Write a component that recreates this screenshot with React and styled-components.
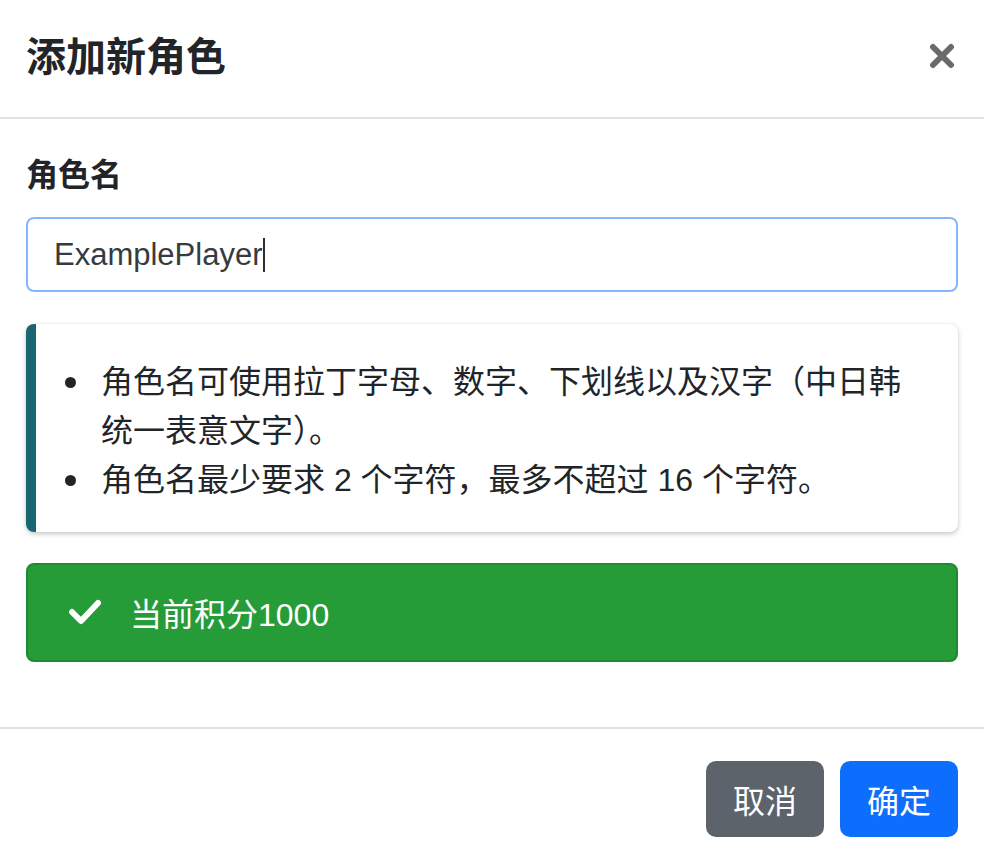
import React from "react";
import styled, { createGlobalStyle } from "styled-components";

const GlobalStyle = createGlobalStyle`
    html, body {
        margin: 0;
        padding: 0;
        background: #fff;
    }
    body {
        font-family: "Liberation Sans", "Noto Sans CJK SC", sans-serif;
        color: #212529;
        -webkit-font-smoothing: antialiased;
    }
`;

const Modal = styled.div`
    width: 984px;
    background: #fff;
`;

const Header = styled.div`
    display: flex;
    align-items: center;
    justify-content: space-between;
    height: 119px;
    padding: 0 26px;
    box-sizing: border-box;
    border-bottom: 2px solid #dee2e6;
`;

const Title = styled.h5`
    margin: 0 0 4px;
    font-size: 40px;
    line-height: 60px;
    font-weight: 700;
    color: #212529;
`;

const CloseButton = styled.button`
    display: flex;
    align-items: center;
    justify-content: center;
    width: 32px;
    height: 32px;
    margin: 0 0 6px;
    padding: 0;
    border: 0;
    background: transparent;
    cursor: pointer;
`;

const Body = styled.div`
    padding: 32px 26px 65px;
`;

const Label = styled.label`
    display: block;
    font-size: 32px;
    line-height: 48px;
    font-weight: 600;
    margin-bottom: 18px;
`;

const Field = styled.div`
    display: flex;
    align-items: center;
    height: 75px;
    box-sizing: border-box;
    padding: 0 26px;
    border: 2px solid #86b7fe;
    border-radius: 8px;
    font-size: 31px;
    color: #353b41;
    margin-bottom: 32px;
`;

const Caret = styled.span`
    display: inline-block;
    width: 2px;
    height: 34px;
    margin-left: 1px;
    background: #2b2f33;
`;

const Callout = styled.div`
    border-left: 10px solid #18666f;
    border-radius: 8px;
    box-shadow: 0 2px 5px rgba(0, 0, 0, 0.22), 0 0 1px rgba(0, 0, 0, 0.12);
    padding: 34px 40px 27px 0;
    margin-bottom: 31px;
`;

const Notes = styled.ul`
    margin: 0;
    padding-left: 29px;
    list-style: none;
    font-size: 32px;
    line-height: 49px;
    color: #212529;
`;

const Note = styled.li`
    display: flex;
    align-items: flex-start;
    gap: 25px;
`;

const Dot = styled.span`
    flex: none;
    width: 11px;
    height: 11px;
    margin-top: 19px;
    border-radius: 50%;
    background: #212529;
`;

const Alert = styled.div`
    display: flex;
    align-items: center;
    gap: 28px;
    height: 99px;
    box-sizing: border-box;
    padding: 0 40px 2px 40px;
    background: #259c37;
    border: 2px solid #208a30;
    border-radius: 8px;
    color: #fff;
    font-size: 32px;
`;

const Footer = styled.div`
    display: flex;
    justify-content: flex-end;
    gap: 16px;
    padding: 32px 26px;
    border-top: 2px solid #dee2e6;
`;

const Button = styled.button`
    height: 76px;
    padding: 0 27px;
    border: 0;
    border-radius: 10px;
    font-family: inherit;
    font-size: 32px;
    color: #fff;
    background: ${({ $variant }) => ($variant === "primary" ? "#0d6efd" : "#5c636a")};
    cursor: pointer;
`;

function CloseIcon() {
    return (
        <svg width="26" height="26" viewBox="0 0 26 26">
            <path
                d="M4 4 L22 22 M22 4 L4 22"
                stroke="#6a6a6a"
                strokeWidth="6"
                strokeLinecap="round"
            />
        </svg>
    );
}

function CheckIcon() {
    return (
        <svg width="34" height="28" viewBox="0 0 34 28">
            <path
                d="M4 14 L13 23 L30 5"
                fill="none"
                stroke="#fff"
                strokeWidth="6"
                strokeLinecap="round"
                strokeLinejoin="round"
            />
        </svg>
    );
}

const notes = [
    "角色名可使用拉丁字母、数字、下划线以及汉字（中日韩统一表意文字）。",
    "角色名最少要求 2 个字符，最多不超过 16 个字符。",
];

export default function App() {
    return (
        <>
            <GlobalStyle />
            <Modal>
                <Header>
                    <Title>添加新角色</Title>
                    <CloseButton aria-label="关闭">
                        <CloseIcon />
                    </CloseButton>
                </Header>
                <Body>
                    <Label>角色名</Label>
                    <Field>
                        ExamplePlayer
                        <Caret />
                    </Field>
                    <Callout>
                        <Notes>
                            {notes.map((text, i) => (
                                <Note key={i}>
                                    <Dot />
                                    <span>{text}</span>
                                </Note>
                            ))}
                        </Notes>
                    </Callout>
                    <Alert>
                        <CheckIcon />
                        <span>当前积分1000</span>
                    </Alert>
                </Body>
                <Footer>
                    <Button>取消</Button>
                    <Button $variant="primary">确定</Button>
                </Footer>
            </Modal>
        </>
    );
}
